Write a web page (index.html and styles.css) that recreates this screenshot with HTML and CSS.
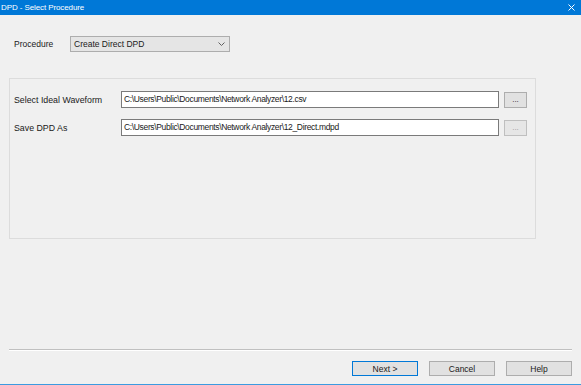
FILE: index.html
```html
<!DOCTYPE html>
<html lang="en">
<head>
    <meta charset="UTF-8">
    <title>DPD - Select Procedure</title>
    <link rel="stylesheet" href="styles.css">
</head>
<body>
<div class="window">
    <div class="titlebar">
        <span class="title">DPD - Select Procedure</span>
        <svg class="close" width="7" height="7" viewBox="0 0 7 7">
            <path d="M0.5 0.5 L6.5 6.5 M6.5 0.5 L0.5 6.5" stroke="#fff" stroke-width="1"/>
        </svg>
    </div>
    <div class="content">
        <div class="procedure-row">
            <label class="label">Procedure</label>
            <div class="combo">
                <span>Create Direct DPD</span>
                <svg class="chevron" width="7" height="4" viewBox="0 0 7 4">
                    <path d="M0.5 0.5 L3.5 3.5 L6.5 0.5" stroke="#606060" stroke-width="1" fill="none"/>
                </svg>
            </div>
        </div>
        <div class="group">
            <div class="field-row">
                <label class="field-label">Select Ideal Waveform</label>
                <div class="textbox">C:\Users\Public\Documents\Network Analyzer\12.csv</div>
                <button class="browse">...</button>
            </div>
            <div class="field-row">
                <label class="field-label">Save DPD As</label>
                <div class="textbox">C:\Users\Public\Documents\Network Analyzer\12_Direct.mdpd</div>
                <button class="browse disabled">...</button>
            </div>
        </div>
        <div class="spacer"></div>
        <div class="separator"></div>
        <div class="buttons">
            <button class="btn default">Next &gt;</button>
            <button class="btn">Cancel</button>
            <button class="btn">Help</button>
        </div>
    </div>
</div>
</body>
</html>
```

FILE: styles.css
```css
body {
    margin: 0;
    padding: 0;
    background-color: #f0f0f0;
    font-family: "Liberation Sans", Arial, sans-serif;
    font-size: 8.5px;
    color: #1a1a1a;
    overflow: hidden;
}
.window {
    width: 581px;
    height: 385px;
    display: flex;
    flex-direction: column;
    box-sizing: border-box;
    border-bottom: 1px solid #3c9be0;
}
.titlebar {
    height: 15px;
    background-color: #0078d7;
    display: flex;
    align-items: center;
    justify-content: space-between;
    padding: 0 6px 0 1px;
    flex-shrink: 0;
}
.title {
    color: #fff;
    font-size: 8px;
    letter-spacing: -0.1px;
}
.close {
    display: block;
}
.content {
    flex: 1;
    display: flex;
    flex-direction: column;
    padding: 21px 9px 0 9px;
}
.procedure-row {
    display: flex;
    align-items: center;
    height: 16px;
}
.label {
    width: 56px;
    padding-left: 5px;
}
.combo {
    width: 160px;
    height: 16px;
    box-sizing: border-box;
    border: 1px solid #adadad;
    background-color: #e5e5e5;
    display: flex;
    align-items: center;
    justify-content: space-between;
    padding: 0 4px 0 3px;
}
.group {
    margin-top: 26px;
    width: 527px;
    height: 161px;
    box-sizing: border-box;
    border: 1px solid #dcdcdc;
    padding: 12px 0 0 0;
    display: flex;
    flex-direction: column;
    gap: 11px;
}
.field-row {
    display: flex;
    align-items: center;
    height: 17px;
}
.field-label {
    width: 107px;
    padding-left: 4px;
    font-size: 8.8px;
}
.textbox {
    width: 378px;
    height: 17px;
    box-sizing: border-box;
    border: 1px solid #7a7a7a;
    background-color: #fff;
    padding: 0 2px;
    line-height: 15px;
    letter-spacing: -0.35px;
    white-space: nowrap;
    overflow: hidden;
}
.browse {
    margin-left: 5px;
    width: 23px;
    height: 16px;
    box-sizing: border-box;
    border: 1px solid #adadad;
    background-color: #e1e1e1;
    font-family: inherit;
    font-size: 8px;
    color: #1a1a1a;
    padding: 0;
    line-height: 10px;
}
.browse.disabled {
    border-color: #bfbfbf;
    background-color: #e6e6e6;
    color: #9a9a9a;
}
.spacer {
    flex: 1;
}
.separator {
    height: 1px;
    border-top: 1px solid #c0c0c0;
    background-color: #fff;
    width: 563px;
    margin-bottom: 10px;
}
.buttons {
    display: flex;
    justify-content: flex-end;
    gap: 11px;
    width: 563px;
    margin-bottom: 8px;
}
.btn {
    width: 66px;
    height: 15px;
    box-sizing: border-box;
    border: 1px solid #adadad;
    background-color: #e1e1e1;
    font-family: inherit;
    font-size: 8.5px;
    color: #1a1a1a;
    padding: 0;
}
.btn.default {
    border-color: #0078d7;
}
```
